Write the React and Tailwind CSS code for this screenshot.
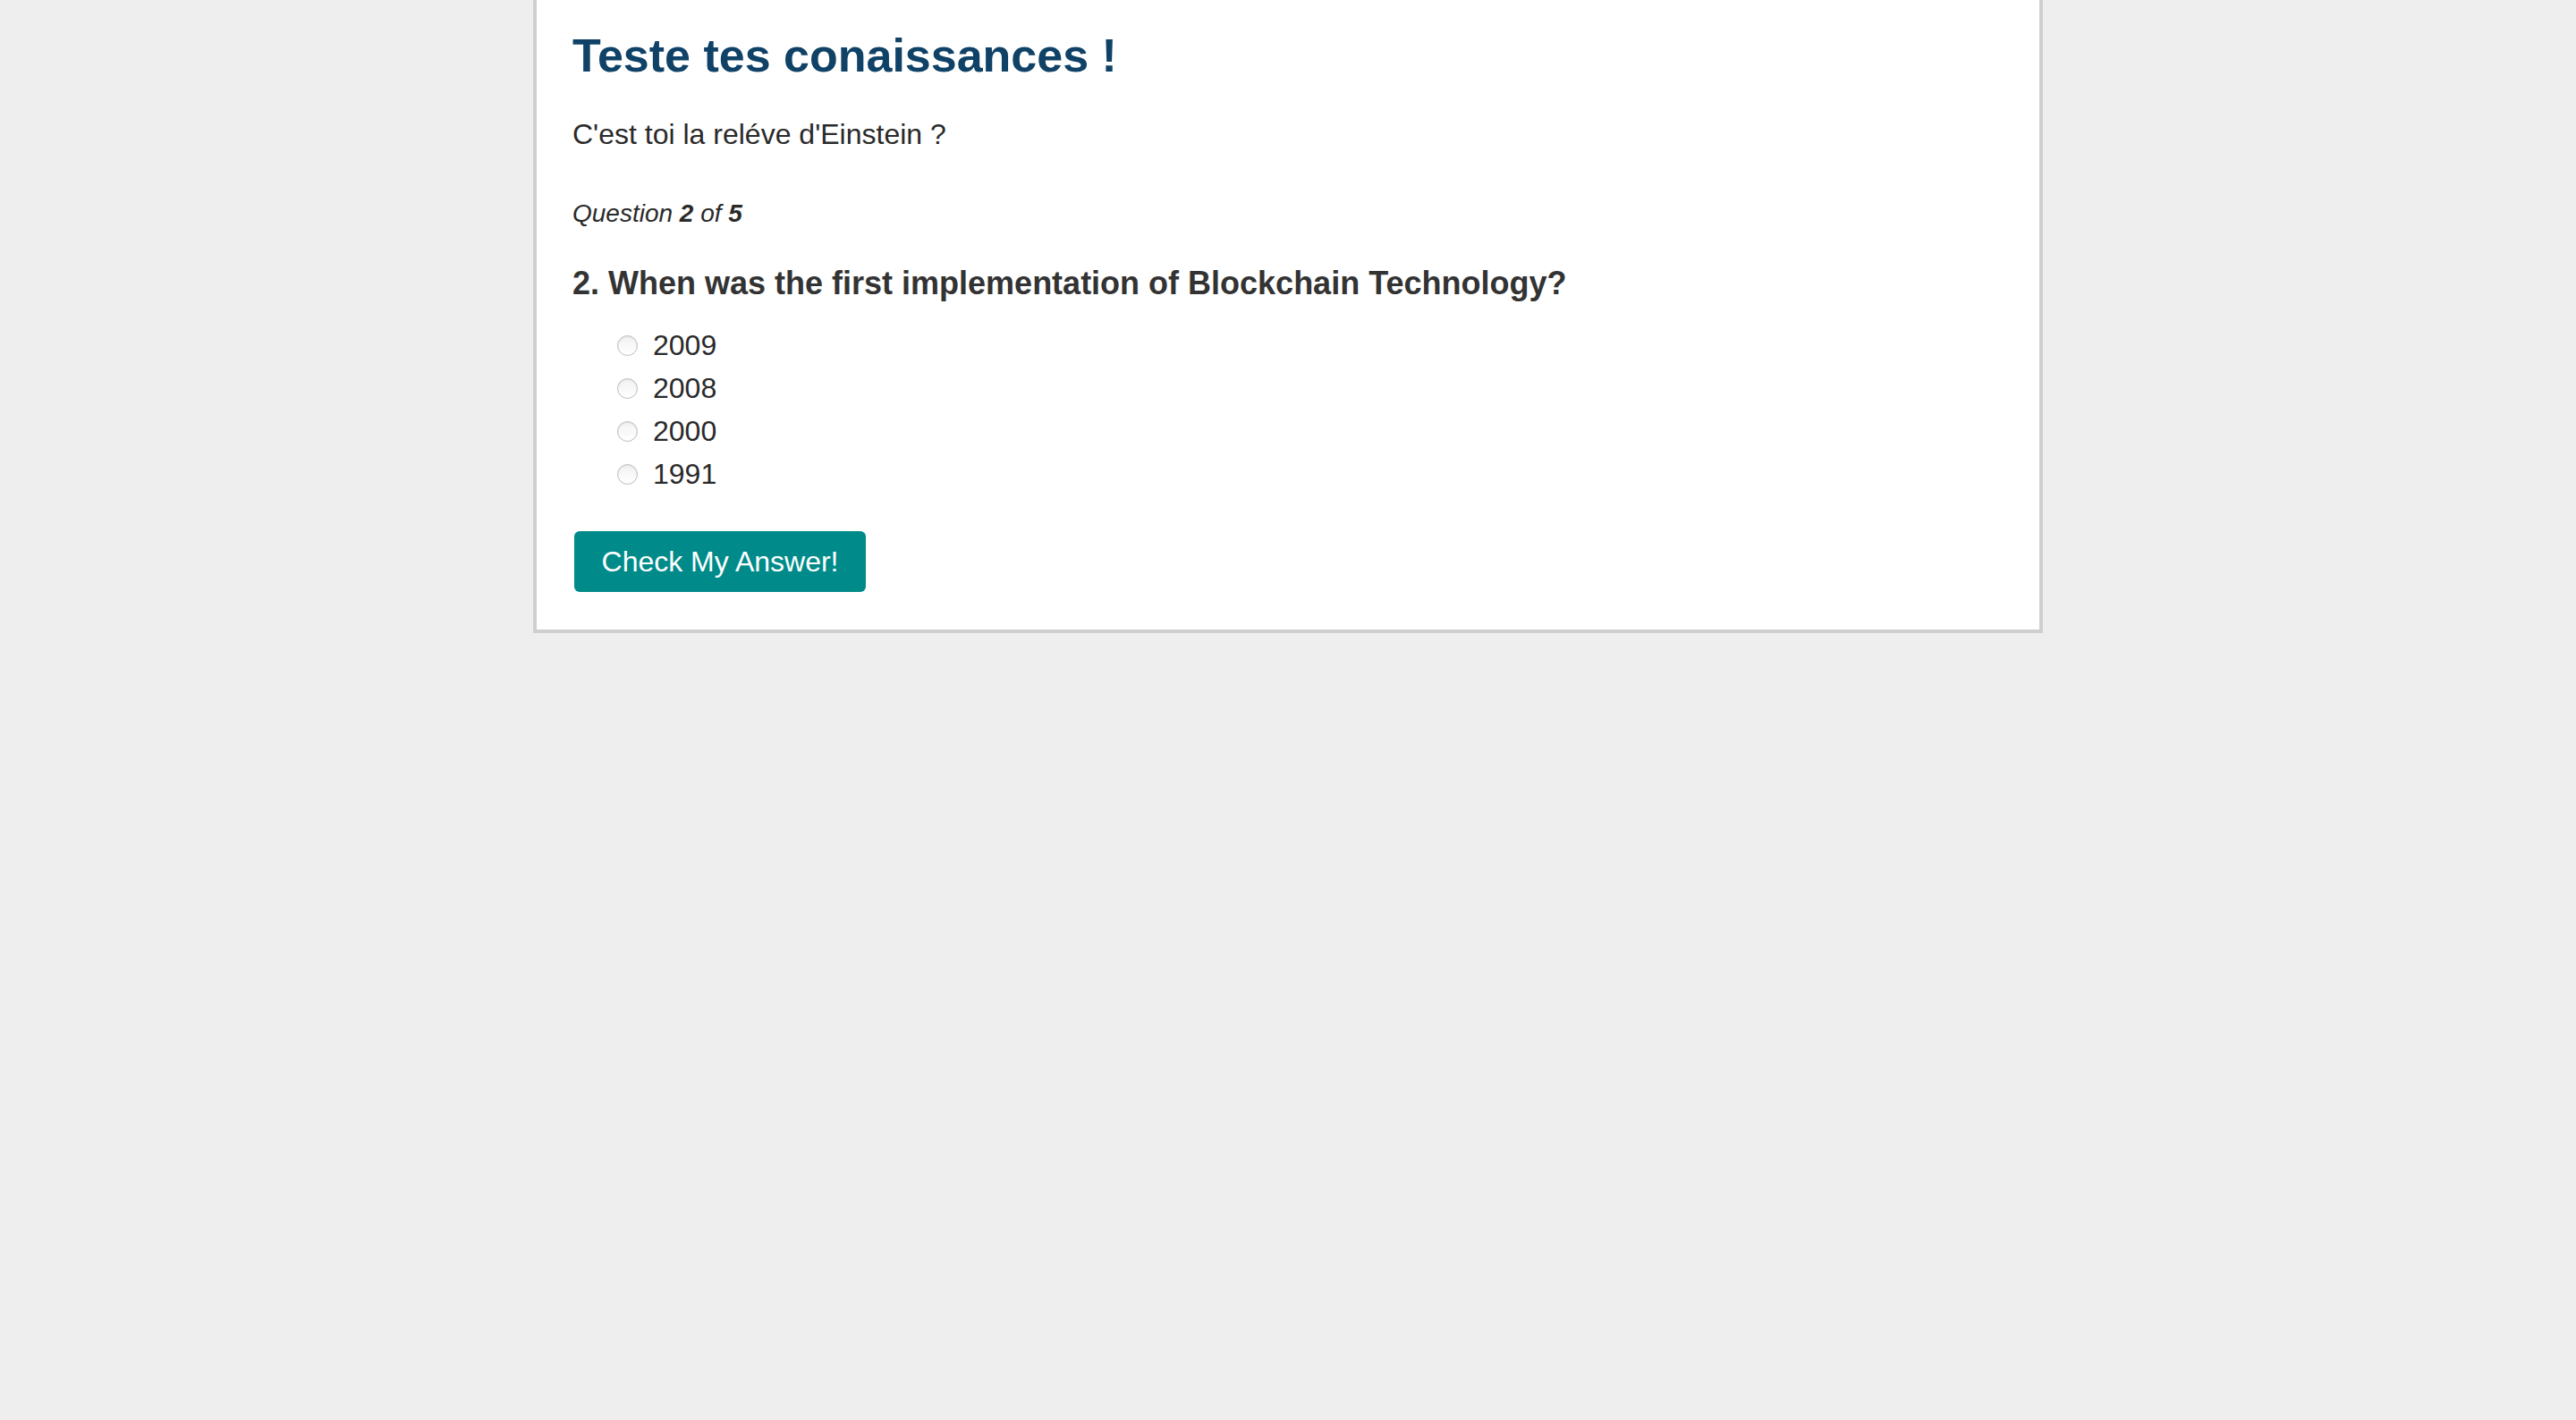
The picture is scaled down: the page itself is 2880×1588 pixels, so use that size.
export default function App() {
  const options = ["2009", "2008", "2000", "1991"];
  return (
    <div className="min-h-screen w-full bg-[#eeeeee]" style={{ fontFamily: '"Liberation Sans", Arial, sans-serif' }}>
      <div className="mx-auto w-[1688px] bg-white border-x-4 border-b-4 border-[#cfcfcf] px-[40px] pt-[32px] pb-[42px]">
        <h1 className="text-[52px] leading-[60px] font-bold text-[#0f4266]">Teste tes conaissances !</h1>
        <p className="mt-[38px] text-[32px] leading-[40px] text-[#2a2a2a]">C'est toi la reléve d'Einstein ?</p>
        <p className="mt-[51px] text-[28px] leading-[36px] italic text-[#2a2a2a]">
          Question <b>2</b> of <b>5</b>
        </p>
        <h2 className="mt-[38px] text-[36px] leading-[44px] font-bold text-[#333333]">
          2. When was the first implementation of Blockchain Technology?
        </h2>
        <ul className="mt-[23px] ml-[50px]">
          {options.map((o) => (
            <li key={o} className="flex items-center h-[48px]">
              <span className="w-[23px] h-[23px] rounded-full border border-[#bdbdbd] bg-gradient-to-b from-[#f2f2f2] to-white shadow-[inset_0_1px_2px_rgba(0,0,0,0.08)]" />
              <span className="ml-[17px] text-[32px] leading-[48px] text-[#2a2a2a]">{o}</span>
            </li>
          ))}
        </ul>
        <button className="mt-[40px] ml-[2px] w-[326px] h-[68px] rounded-[6px] bg-[#008b8a] text-white text-[32px] leading-[68px] text-center">
          Check My Answer!
        </button>
      </div>
    </div>
  );
}
